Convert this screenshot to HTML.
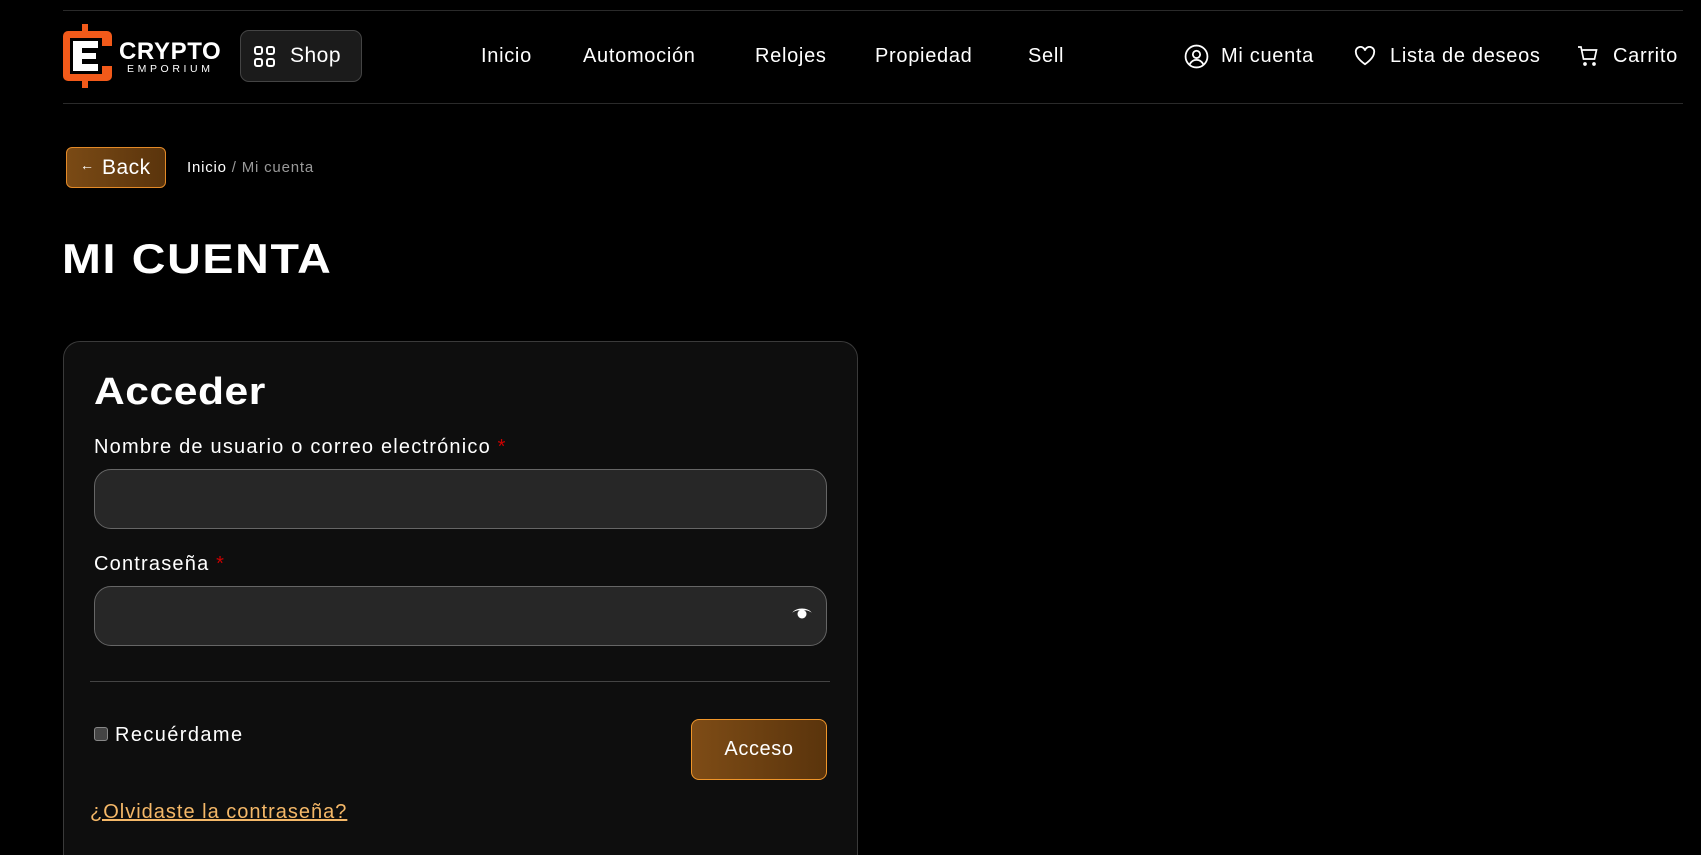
<!DOCTYPE html>
<html style="width:1701px;height:855px;overflow:hidden"><head><meta charset="utf-8"><style>
*{box-sizing:border-box;margin:0;padding:0}
body{width:1701px;height:855px;background:#000;color:#fff;font-family:"Liberation Sans",sans-serif;position:relative;overflow:hidden}
.a{position:absolute}
.line{position:absolute;left:63px;width:1620px;height:1px;background:#2a2a2a}
.nav{font-size:20px;top:45px;color:#fff;letter-spacing:0.7px}
.lbl{font-size:20px;left:94px;letter-spacing:1.2px}
.inp{position:absolute;left:94px;width:733px;height:60px;background:#272727;border:1px solid #666;border-radius:17px}
</style></head><body>
<div class="line" style="top:10px"></div>
<div class="line" style="top:103px"></div>
<svg class="a" style="left:63px;top:24px" width="49" height="64" viewBox="0 0 49 64">
<rect x="19" y="0" width="6" height="64" fill="#f25a1a"/>
<rect x="0" y="7" width="49" height="50" rx="5" fill="#f25a1a"/>
<rect x="38" y="22" width="11" height="20" fill="#000"/>
<rect x="7" y="14" width="32" height="36" fill="#000"/>
<path d="M10 17h25v7h-16v5h14v6h-14v5h16v7h-25z" fill="#fff"/>
</svg>
<div class="a" style="left:119px;top:38px;font-size:24px;font-weight:bold;letter-spacing:0.6px">CRYPTO</div>
<div class="a" style="left:127px;top:63px;font-size:10.5px;letter-spacing:3.6px">EMPORIUM</div>
<div class="a" style="left:240px;top:30px;width:122px;height:52px;background:#1b1b1b;border:1px solid #444;border-radius:9px"></div>
<svg class="a" style="left:254px;top:46px" width="21" height="21" viewBox="0 0 21 21" fill="none" stroke="#fff" stroke-width="2"><rect x="1" y="1" width="7" height="7" rx="2"/><rect x="13" y="1" width="7" height="7" rx="2"/><rect x="1" y="13" width="7" height="7" rx="2"/><rect x="13" y="13" width="7" height="7" rx="2"/></svg>
<div class="a" style="left:290px;top:44px;font-size:21px;letter-spacing:0.5px">Shop</div>
<div class="a nav" style="left:481px">Inicio</div>
<div class="a nav" style="left:583px">Automoción</div>
<div class="a nav" style="left:755px">Relojes</div>
<div class="a nav" style="left:875px">Propiedad</div>
<div class="a nav" style="left:1028px">Sell</div>
<svg class="a" style="left:1184px;top:44px" width="25" height="25" viewBox="0 0 24 24" fill="none" stroke="#fff" stroke-width="1.7"><circle cx="12" cy="12" r="10.5"/><circle cx="12" cy="10" r="3.5"/><path d="M5.5 19.5c1.5-3 3.8-4.3 6.5-4.3s5 1.3 6.5 4.3"/></svg>
<div class="a nav" style="left:1221px">Mi cuenta</div>
<svg class="a" style="left:1354px;top:46px" width="22" height="20" viewBox="0 0 24 22" fill="none" stroke="#fff" stroke-width="2"><path d="M12 20S2 13.5 2 7.2A5 5 0 0 1 12 5a5 5 0 0 1 10 2.2C22 13.5 12 20 12 20z"/></svg>
<div class="a nav" style="left:1390px">Lista de deseos</div>
<svg class="a" style="left:1577px;top:45px" width="22" height="22" viewBox="0 0 22 22" fill="none" stroke="#fff" stroke-width="1.7"><path d="M1 2h3l2.5 12h11l2-9H5.5"/><circle cx="8" cy="19" r="1" fill="#fff"/><circle cx="17" cy="19" r="1" fill="#fff"/></svg>
<div class="a nav" style="left:1613px">Carrito</div>
<div class="a" style="left:66px;top:147px;width:100px;height:41px;border:1px solid #e38a28;border-radius:6px;background:linear-gradient(90deg,#7a4a15,#5a340c)"></div>
<div class="a" style="left:80px;top:157px;font-size:14px">←</div>
<div class="a" style="left:102px;top:156px;font-size:21px;letter-spacing:0.5px">Back</div>
<div class="a" style="left:187px;top:159px;font-size:15px;letter-spacing:0.8px">Inicio <span style="color:#999">/ Mi cuenta</span></div>
<div class="a" style="left:62px;top:235px;font-size:42px;font-weight:bold;letter-spacing:1.5px;transform:scaleX(1.11);transform-origin:left">MI CUENTA</div>
<div class="a" style="left:63px;top:341px;width:795px;height:514px;background:#0e0e0e;border:1px solid #3a3a3a;border-bottom:none;border-radius:17px 17px 0 0"></div>
<div class="a" style="left:94px;top:371px;font-size:38px;font-weight:bold;letter-spacing:0.5px;transform:scaleX(1.12);transform-origin:left">Acceder</div>
<div class="a lbl" style="top:436px">Nombre de usuario o correo electrónico <span style="color:#c00">*</span></div>
<div class="inp" style="top:469px"></div>
<div class="a lbl" style="top:553px">Contraseña <span style="color:#c00">*</span></div>
<div class="inp" style="top:586px"></div>
<svg class="a" style="left:791px;top:606px" width="22" height="14" viewBox="0 0 22 14"><path d="M1 7C5 1 17 1 21 7 19 5 15 4 11 4S3 5 1 7z" fill="#fff"/><circle cx="11" cy="8" r="4.5" fill="#fff"/></svg>
<div class="a" style="left:90px;top:681px;width:740px;height:1px;background:#444"></div>
<div class="a" style="left:94px;top:727px;width:14px;height:14px;background:#444;border:1px solid #888;border-radius:3px"></div>
<div class="a" style="left:115px;top:724px;font-size:20px;letter-spacing:1.4px">Recuérdame</div>
<div class="a" style="left:691px;top:719px;width:136px;height:61px;border:1px solid #f0962a;border-radius:8px;background:linear-gradient(90deg,#7e4c16,#5a340c);font-size:20px;text-align:center;line-height:59px;letter-spacing:0.6px">Acceso</div>
<div class="a" style="left:90px;top:801px;font-size:20px;color:#f5b868;text-decoration:underline;letter-spacing:1px">¿Olvidaste la contraseña?</div>
</body></html>
